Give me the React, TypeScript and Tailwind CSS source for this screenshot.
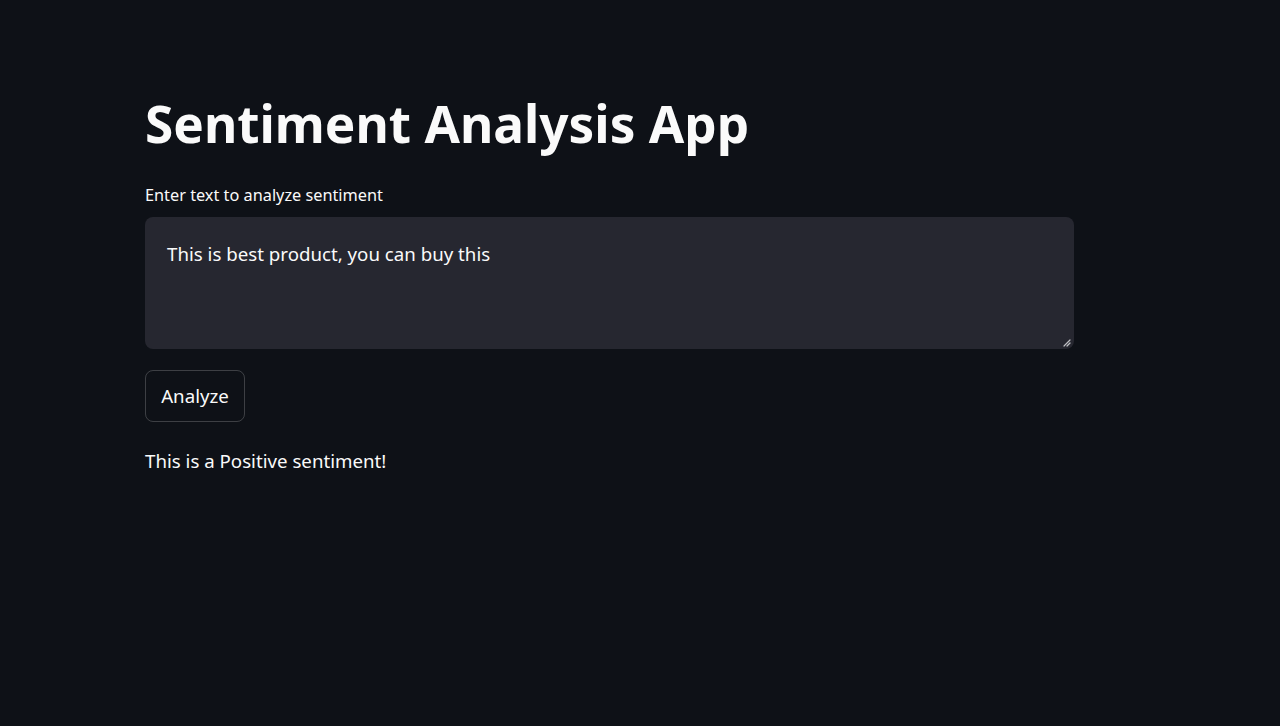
import { useState } from "react";

export default function App() {
  const [text, setText] = useState("This is best product, you can buy this");

  return (
    <div
      className="min-h-[726px] w-full bg-[#0e1117] text-[#fafafa]"
      style={{ fontFamily: '"Noto Sans", "Open Sans", sans-serif' }}
    >
      <main className="ml-[145px] flex w-[929px] flex-col pt-[93px]">
        <h1 className="text-[51.3px] font-bold leading-[60px]">
          Sentiment Analysis App
        </h1>

        <label className="mt-[32px] text-[16.3px] leading-[20px]">
          Enter text to analyze sentiment
        </label>

        <div className="relative mt-[12px] h-[132px] rounded-lg bg-[#262730]">
          <textarea
            value={text}
            onChange={(e) => setText(e.target.value)}
            className="h-full w-full resize-none bg-transparent px-[22px] pt-[25px] text-[18.7px] leading-[24px] text-[#fafafa] outline-none"
          />
          <svg
            className="pointer-events-none absolute bottom-[2px] right-[3px]"
            width="9"
            height="9"
            viewBox="0 0 9 9"
            stroke="#bfc0c4"
            strokeWidth="1.2"
            strokeLinecap="round"
          >
            <line x1="8" y1="2" x2="2" y2="8" />
            <line x1="8" y1="5" x2="5" y2="8" />
          </svg>
        </div>

        <button className="mt-[21px] flex h-[52px] w-[100px] items-center justify-center rounded-lg border border-[#fafafa]/20 bg-transparent text-[18.7px]">
          Analyze
        </button>

        <p className="mt-[27px] text-[18.7px] leading-[24px]">
          This is a Positive sentiment!
        </p>
      </main>
    </div>
  );
}
